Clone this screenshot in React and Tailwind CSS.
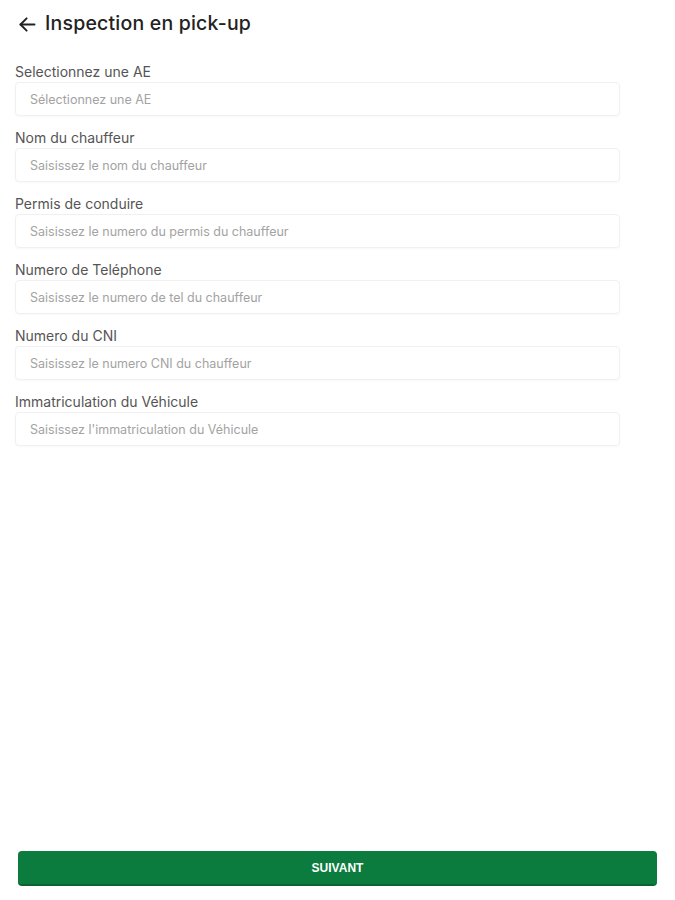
const fields = [
  { label: "Selectionnez une AE", placeholder: "Sélectionnez une AE" },
  { label: "Nom du chauffeur", placeholder: "Saisissez le nom du chauffeur" },
  { label: "Permis de conduire", placeholder: "Saisissez le numero du permis du chauffeur" },
  { label: "Numero de Teléphone", placeholder: "Saisissez le numero de tel du chauffeur" },
  { label: "Numero du CNI", placeholder: "Saisissez le numero CNI du chauffeur" },
  { label: "Immatriculation du Véhicule", placeholder: "Saisissez l'immatriculation du Véhicule" },
];

const App = () => {
  return (
    <div className="h-[900px] flex flex-col bg-white font-['Inter',sans-serif]">
      <header className="flex items-center gap-[7px] pl-[17px] h-[48px]">
        <svg width="21" height="21" viewBox="0 0 24 24" fill="none" stroke="#222" strokeWidth="2.2" strokeLinecap="round" strokeLinejoin="round">
          <path d="M20 12H4" />
          <path d="M11 5l-7 7 7 7" />
        </svg>
        <p className="text-[#222] font-medium text-[19.5px] tracking-[0.2px]">Inspection en pick-up</p>
      </header>
      <form className="flex flex-col gap-[14px] pl-[15px] pr-[55px] mt-[16px]">
        {fields.map((f) => (
          <div key={f.label} className="flex flex-col gap-[2px]">
            <label className="text-[14px] leading-[16px] text-[#555]">{f.label}</label>
            <input
              type="text"
              placeholder={f.placeholder}
              className="h-[34px] px-[14px] text-[12.5px] border border-[#f0f0f0] rounded-[4px] shadow-[0_1px_2px_rgba(0,0,0,0.03)] placeholder:text-[#a3a3a3] outline-none"
            />
          </div>
        ))}
      </form>
      <div className="mt-auto px-[18px] pb-[14px]">
        <button
          type="button"
          className="w-full h-[35px] bg-[#0b7b3e] border-b-2 border-[#086530] rounded-[4px] text-white text-[12px] font-bold font-['Liberation_Sans',sans-serif]"
        >
          SUIVANT
        </button>
      </div>
    </div>
  );
};

export default App;
